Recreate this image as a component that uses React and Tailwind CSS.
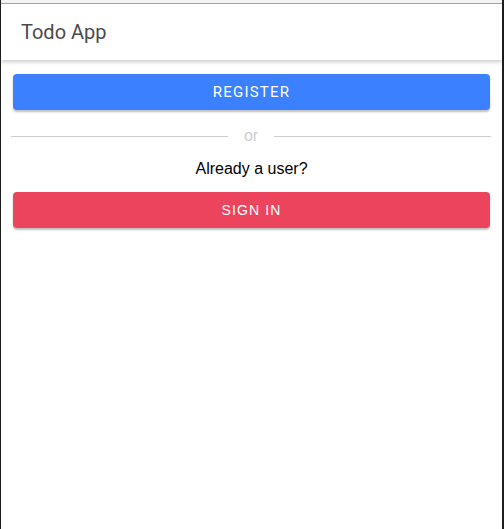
export default function App() {
  return (
    <div className="h-[529px] w-[504px] bg-[#1e1e1e] flex">
      <div className="ml-[1px] mr-[2px] flex-1 bg-white flex flex-col font-['Roboto',sans-serif]">
        <div className="h-[3px] bg-[#f3f3f3]" />
        <div className="h-[1px] bg-[#a8a8a8]" />
        <header className="h-[56px] flex items-center px-[20px] bg-white shadow-[0_2px_4px_rgba(0,0,0,0.2)] relative z-10">
          <span className="text-[20px] text-[#4a4a4a] font-normal">Todo App</span>
        </header>
        <div className="px-[12px] pt-[14px] flex flex-col">
          <button className="h-[36px] w-full rounded-[4px] bg-[#3a80ff] text-white text-[15px] tracking-[0.08em] shadow-[0_2px_2px_rgba(0,0,0,0.25)]">
            REGISTER
          </button>
          <div className="flex items-center mt-[16px] ml-[-2px] mr-[-1px]">
            <div className="flex-1 h-[1px] bg-[#cfcfcf]" />
            <span className="px-[16px] text-[16px] text-[#cccccc] leading-[20px] font-['Liberation_Sans',sans-serif]">or</span>
            <div className="flex-1 h-[1px] bg-[#cfcfcf]" />
          </div>
          <p className="text-center text-[16px] text-black mt-[13px] leading-[20px] font-['Liberation_Sans',sans-serif]">Already a user?</p>
          <button className="mt-[13px] h-[36px] w-full rounded-[4px] bg-[#ec445c] text-white text-[14px] tracking-[0.08em] shadow-[0_2px_2px_rgba(0,0,0,0.25)] font-['Liberation_Sans',sans-serif]">
            SIGN IN
          </button>
        </div>
      </div>
    </div>
  );
}
